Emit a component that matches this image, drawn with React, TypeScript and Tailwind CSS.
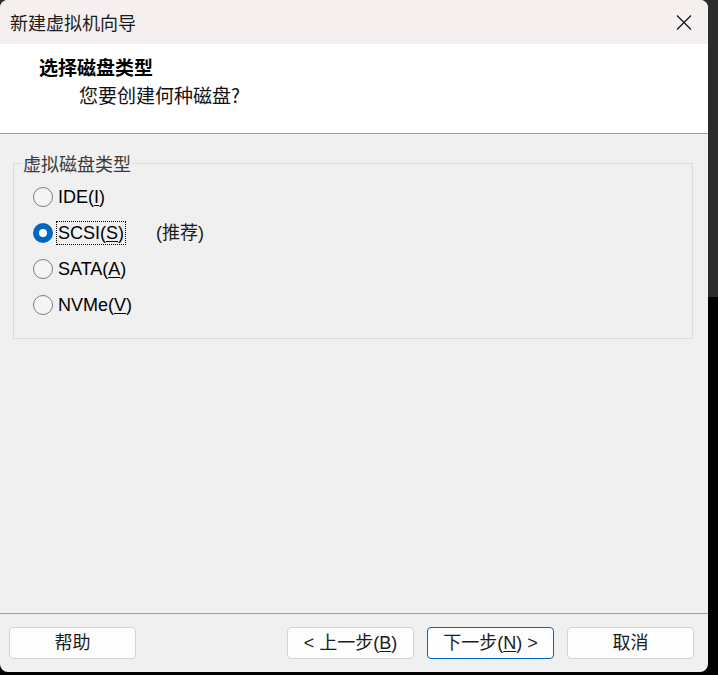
import React from "react";

const cjk = "font-['Noto_Sans_CJK_SC',sans-serif]";
const ui = "font-['Liberation_Sans','Noto_Sans_CJK_SC',sans-serif]";

type Option = { key: string; before: string; mnemonic: string; checked?: boolean; note?: string };

const options: Option[] = [
  { key: "ide", before: "IDE(", mnemonic: "I" },
  { key: "scsi", before: "SCSI(", mnemonic: "S", checked: true, note: "(推荐)" },
  { key: "sata", before: "SATA(", mnemonic: "A" },
  { key: "nvme", before: "NVMe(", mnemonic: "V" },
];

function Radio({ checked }: { checked?: boolean }) {
  if (checked) {
    return (
      <span className="flex h-[20px] w-[20px] shrink-0 items-center justify-center rounded-full bg-[#0067c0]">
        <span className="h-[8px] w-[8px] rounded-full bg-white" />
      </span>
    );
  }
  return <span className="h-[20px] w-[20px] shrink-0 rounded-full border border-[#7d7d7d] bg-[#f5f5f5]" />;
}

function Button({ children, primary }: { children: React.ReactNode; primary?: boolean }) {
  return (
    <button
      className={
        primary
          ? `flex h-[32px] w-[127px] items-center justify-center rounded-[4px] border border-[#0067c0] bg-[#fdfdfd] text-[18px] leading-none text-[#1b1b1b] ${ui}`
          : `flex h-[32px] w-[127px] items-center justify-center rounded-[4px] border border-[#d3d3d3] bg-[#fdfdfd] text-[18px] leading-none text-[#1b1b1b] ${ui}`
      }
    >
      {children}
    </button>
  );
}

export default function App() {
  return (
    <div className="h-[675px] w-[718px] overflow-hidden bg-[linear-gradient(to_bottom,#2c2c2c_297px,#000_297px)]">
      <div className="flex h-[672px] w-[708px] flex-col overflow-hidden rounded-[8px] bg-[#f0f0f0]">
        {/* title bar */}
        <div className="flex h-[44px] shrink-0 items-center justify-between bg-[#f5f0ef] pl-[10px] pr-[16px]">
          <span className={`text-[18px] leading-[24px] text-[#1a1a1a] ${cjk}`}>新建虚拟机向导</span>
          <svg width="16" height="15" viewBox="0 0 16 15" className="text-[#1a1a1a]">
            <path d="M1 0.5 L15 14.5 M15 0.5 L1 14.5" stroke="currentColor" strokeWidth="1.3" fill="none" />
          </svg>
        </div>

        {/* header */}
        <div className="h-[90px] shrink-0 border-b border-[#a0a0a0] bg-white pl-[39px] pt-[11px]">
          <div className={`text-[19px] font-bold leading-[24px] text-black ${cjk}`}>选择磁盘类型</div>
          <div className={`mt-[4px] pl-[40px] text-[19px] leading-[24px] text-[#111] ${cjk}`}>您要创建何种磁盘?</div>
        </div>

        {/* body */}
        <div className="flex-1 px-[13px] pt-[29px]">
          <div className="relative h-[176px] w-[680px] border border-[#dcdcdc]">
            <span
              className={`absolute -top-[11px] left-[8px] bg-[#f0f0f0] px-[1px] text-[18px] leading-[20px] text-[#3a3a3a] ${cjk}`}
            >
              虚拟磁盘类型
            </span>
            <div className="flex flex-col pl-[19px] pt-[15px]">
              {options.map((o) => (
                <div key={o.key} className="flex h-[36px] items-center">
                  <Radio checked={o.checked} />
                  <div className="ml-[5px] flex items-center">
                    <span className={`w-[98px] text-[18px] leading-[20px] text-black ${ui}`}>
                      <span
                        className={o.checked ? "outline outline-1 outline-dotted outline-black outline-offset-[1px]" : ""}
                      >
                        {o.before}
                        <span className="underline underline-offset-[2px]">{o.mnemonic}</span>)
                      </span>
                    </span>
                    {o.note ? (
                      <span className={`text-[18px] leading-[20px] text-[#1a1a1a] ${ui}`}>{o.note}</span>
                    ) : null}
                  </div>
                </div>
              ))}
            </div>
          </div>
        </div>

        {/* footer */}
        <div className="flex h-[59px] shrink-0 items-start justify-between border-t border-[#a0a0a0] pl-[9px] pr-[14px] pt-[13px]">
          <Button>帮助</Button>
          <div className="flex gap-[13px]">
            <Button>
              &lt; 上一步(<span className="underline underline-offset-[2px]">B</span>)
            </Button>
            <Button primary>
              下一步(<span className="underline underline-offset-[2px]">N</span>) &gt;
            </Button>
            <Button>取消</Button>
          </div>
        </div>
      </div>
    </div>
  );
}
